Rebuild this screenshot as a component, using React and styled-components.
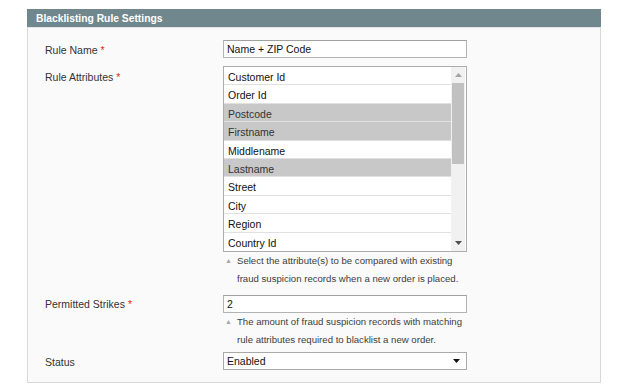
import React from "react";
import styled, { createGlobalStyle } from "styled-components";

const Global = createGlobalStyle`
  html, body { margin: 0; padding: 0; background: #ffffff; }
  body { font-family: "Liberation Sans", Arial, sans-serif; }
`;

const Page = styled.div`
  padding: 9px 0 0 27px;
  width: 574px;
`;

const Header = styled.div`
  height: 18px;
  line-height: 19px;
  background: #6f878d;
  border-bottom: 1px solid #e2e6e7;
  color: #ffffff;
  font-weight: bold;
  font-size: 10.3px;
  padding-left: 9px;
`;

const Panel = styled.div`
  background: #fafafa;
  border: 1px solid #d8d8d8;
  border-top: none;
  padding: 12px 0 11px 17px;
`;

const Form = styled.div`
  display: grid;
  grid-template-columns: 178px 244px;
  row-gap: 7px;
`;

const Label = styled.div`
  font-size: 10.5px;
  color: #333;
  line-height: 18px;
  padding-top: ${(p) => p.$pt ?? 1}px;
  margin-top: ${(p) => p.$mt || 0}px;
`;

const Req = styled.span`
  color: #e02b27;
  margin-left: 3px;
`;

const Field = styled.div`
  display: flex;
  flex-direction: column;
  margin-top: ${(p) => p.$mt || 0}px;
`;

const TextInput = styled.div`
  box-sizing: border-box;
  height: 18px;
  border: 1px solid #b3b3b3;
  border-top-color: #a0a0a0;
  background: #fff;
  font-size: 10.5px;
  line-height: 17px;
  padding-left: 3px;
  color: #111;
`;

const ListBox = styled.div`
  box-sizing: border-box;
  display: flex;
  height: 186px;
  border: 1px solid #adadad;
  background: #fff;
`;

const Options = styled.div`
  flex: 1;
  display: flex;
  flex-direction: column;
`;

const Option = styled.div`
  box-sizing: border-box;
  height: 18.4px;
  line-height: 16.4px;
  padding: 2px 0 0 4px;
  font-size: 10.5px;
  color: ${(p) => (p.$selected ? "#333" : "#111")};
  background: ${(p) => (p.$selected ? "#c8c8c8" : "#fff")};
  border-bottom: 1px solid #e0e0e0;
  &:last-child { border-bottom: none; }
`;

const Scrollbar = styled.div`
  width: 14px;
  margin-right: 1px;
  background: #f1f1f1;
  display: flex;
  flex-direction: column;
  align-items: center;
`;

const ArrowBtn = styled.div`
  height: 16px;
  width: 14px;
  display: flex;
  align-items: center;
  justify-content: center;
`;

const Track = styled.div`
  flex: 1;
  width: 12px;
`;

const Thumb = styled.div`
  height: 81px;
  width: 12px;
  background: #c1c1c1;
`;

const Hint = styled.div`
  font-size: 9.6px;
  color: #3c3c3c;
  line-height: 18px;
  padding-left: 14px;
  position: relative;
`;

const HintArrow = styled.span`
  position: absolute;
  left: 2px;
  top: 0;
  font-size: 7px;
  color: #a8a8a8;
`;

const Select = styled.div`
  box-sizing: border-box;
  height: 18px;
  border: 1px solid #a9a9a9;
  background: #fff;
  font-size: 10.5px;
  line-height: 16px;
  padding: 0 6px 0 3px;
  color: #111;
  display: flex;
  justify-content: space-between;
  align-items: center;
`;

const Tri = ({ up, color = "#555" }) => (
  <svg width="7" height="4" viewBox="0 0 7 4">
    {up ? (
      <polygon points="0,4 7,4 3.5,0" fill={color} />
    ) : (
      <polygon points="0,0 7,0 3.5,4" fill={color} />
    )}
  </svg>
);

const options = [
  ["Customer Id", false],
  ["Order Id", false],
  ["Postcode", true],
  ["Firstname", true],
  ["Middlename", false],
  ["Lastname", true],
  ["Street", false],
  ["City", false],
  ["Region", false],
  ["Country Id", false],
];

export default function App() {
  return (
    <>
      <Global />
      <Page>
        <Header>Blacklisting Rule Settings</Header>
        <Panel>
          <Form>
            <Label>
              Rule Name<Req>*</Req>
            </Label>
            <Field>
              <TextInput>Name + ZIP Code</TextInput>
            </Field>

            <Label $pt={2}>
              Rule Attributes<Req>*</Req>
            </Label>
            <Field>
              <ListBox>
                <Options>
                  {options.map(([t, s]) => (
                    <Option key={t} $selected={s}>
                      {t}
                    </Option>
                  ))}
                </Options>
                <Scrollbar>
                  <ArrowBtn>
                    <Tri up color="#a3a3a3" />
                  </ArrowBtn>
                  <Track>
                    <Thumb />
                  </Track>
                  <ArrowBtn>
                    <Tri color="#505050" />
                  </ArrowBtn>
                </Scrollbar>
              </ListBox>
              <Hint>
                <HintArrow>▲</HintArrow>
                Select the attribute(s) to be compared with existing
                <br />
                fraud suspicion records when a new order is placed.
              </Hint>
            </Field>

            <Label $pt={0}>
              Permitted Strikes<Req>*</Req>
            </Label>
            <Field>
              <TextInput>2</TextInput>
              <Hint>
                <HintArrow>▲</HintArrow>
                The amount of fraud suspicion records with matching
                <br />
                rule attributes required to blacklist a new order.
              </Hint>
            </Field>

            <Label $pt={1} $mt={-4}>Status</Label>
            <Field $mt={-4}>
              <Select>
                <span>Enabled</span>
                <Tri color="#111" />
              </Select>
            </Field>
          </Form>
        </Panel>
      </Page>
    </>
  );
}
